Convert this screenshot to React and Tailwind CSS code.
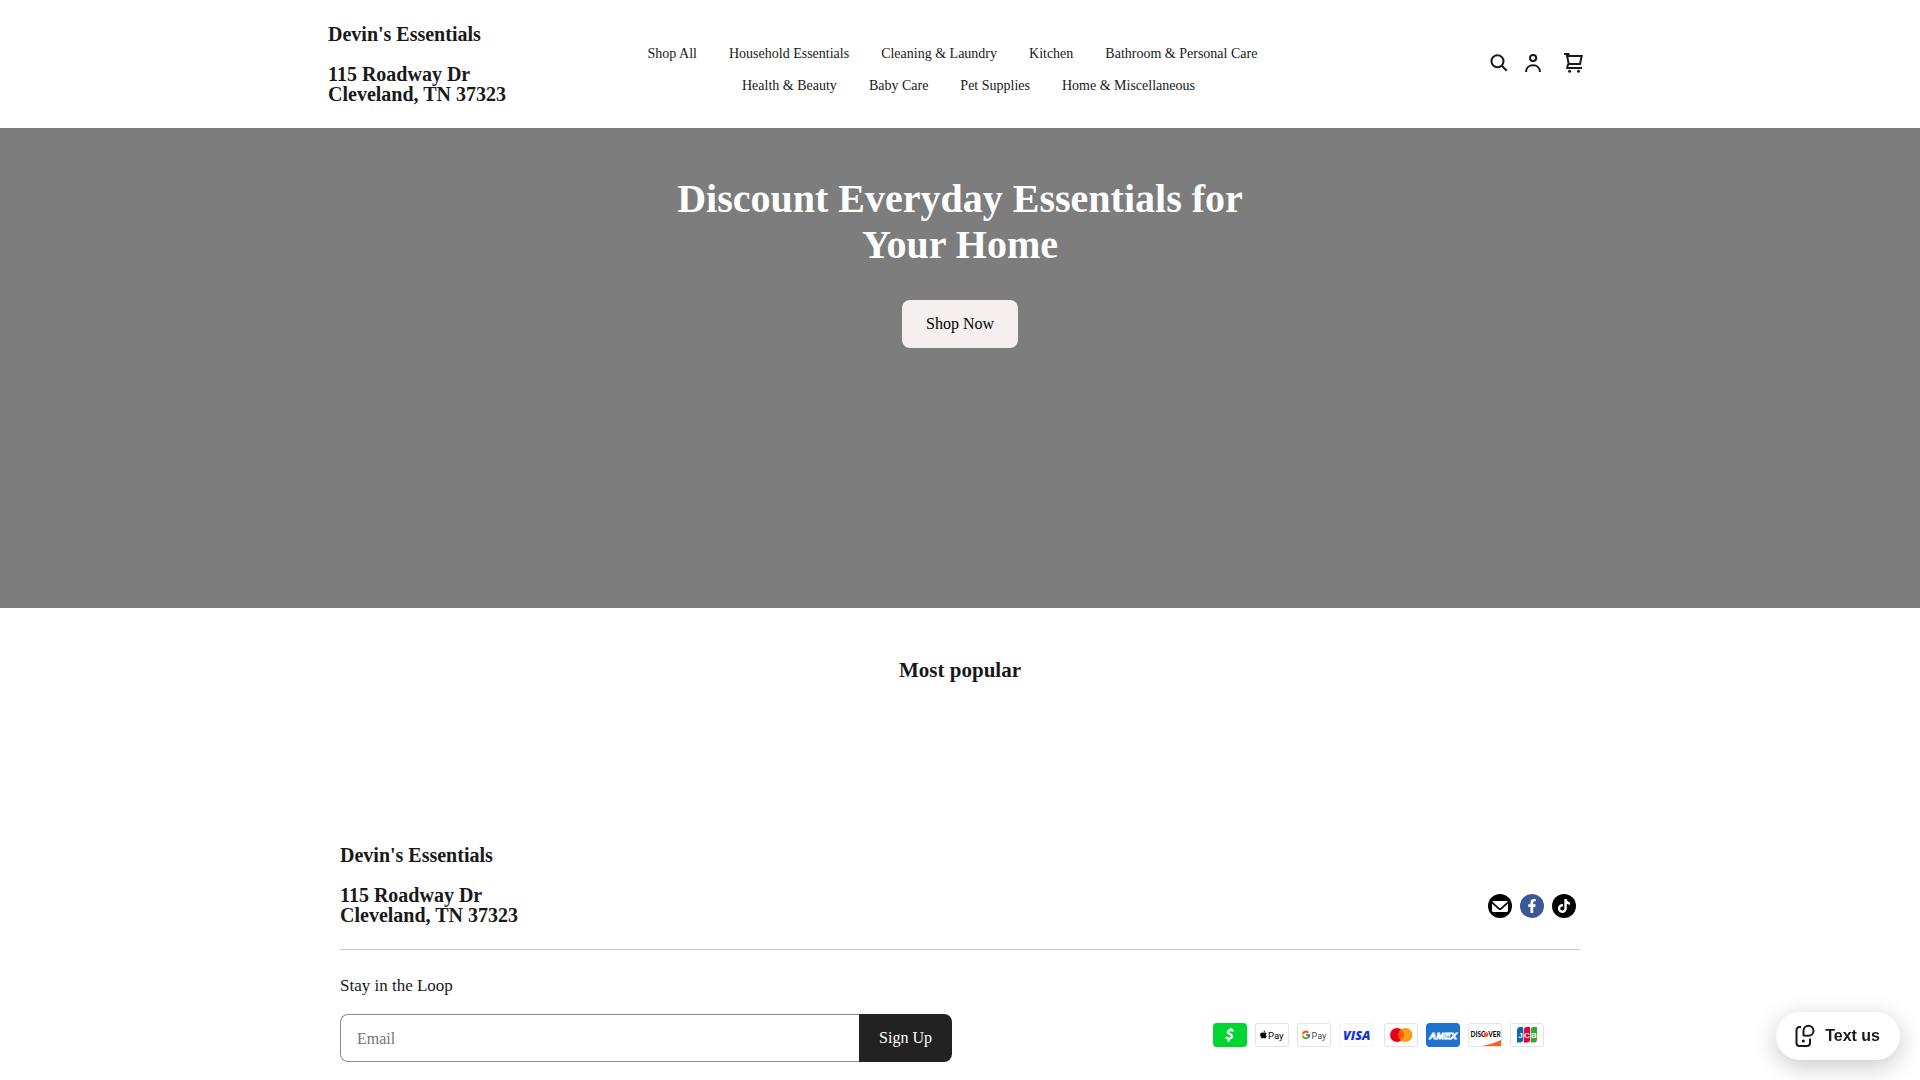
import { FaApple, FaFacebookF, FaTiktok } from 'react-icons/fa'
import { FcGoogle } from 'react-icons/fc'

const navLinks = [
  'Shop All',
  'Household Essentials',
  'Cleaning & Laundry',
  'Kitchen',
  'Bathroom & Personal Care',
  'Health & Beauty',
  'Baby Care',
  'Pet Supplies',
  'Home & Miscellaneous',
]

function StoreName() {
  return (
    <a href="#" className="block text-xl leading-5 font-bold">
      <p className="mb-5">Devin's Essentials</p>
      <p>115 Roadway Dr</p>
      <p>Cleveland, TN 37323</p>
    </a>
  )
}

function SearchIcon() {
  return (
    <svg width="24" height="24" viewBox="0 0 24 24" fill="none" stroke="currentColor" strokeWidth="2">
      <circle cx="10.5" cy="10.3" r="6" />
      <path d="M14.800 14.800l5 5" />
    </svg>
  )
}

function AccountIcon() {
  return (
    <svg width="24" height="24" viewBox="0 0 24 24" fill="none" stroke="currentColor" strokeWidth="2">
      <circle cx="12.1" cy="7.1" r="3.1" />
      <path d="M5 21c0-4 3-6.700 7-6.700s7 2.700 7 6.700" />
    </svg>
  )
}

function CartIcon() {
  return (
    <svg width="24" height="24" viewBox="0 0 24 24" fill="none" stroke="currentColor" strokeWidth="2">
      <path d="M3 3h5.500M5 5h15.700L19 13H7.700L6 4M7.500 12.500L6.300 16v1H21" />
      <circle cx="8.600" cy="20.300" r="1.500" fill="currentColor" stroke="none" />
      <circle cx="17.500" cy="20.300" r="1.500" fill="currentColor" stroke="none" />
    </svg>
  )
}

function MailIcon() {
  return (
    <svg width="24" height="24" viewBox="0 0 24 24">
      <rect x="4" y="7" width="16" height="11" rx="1.500" fill="#fff" />
      <path d="M4 8.300L10.500 14.300a2.200 2.200 0 0 0 3 0L20 8.300" fill="none" stroke="#000" strokeWidth="1.700" />
    </svg>
  )
}

function TextUsIcon() {
  return (
    <svg width="24" height="24" viewBox="0 0 24 24" fill="none" stroke="currentColor" strokeWidth="2">
      <path d="M8 3H6.500A3 3 0 0 0 3.500 6v13a3 3 0 0 0 3 3H14a3 3 0 0 0 3-3v-4.500" />
      <path d="M10.500 11.500V6.700a5 5 0 1 1 5 5z" strokeLinejoin="round" />
      <circle cx="10.300" cy="17" r="1.600" fill="currentColor" stroke="none" />
    </svg>
  )
}

function Card({ label, children }) {
  return (
    <li>
      <svg width="34" height="24" viewBox="0 0 34 24" role="img" aria-label={label}>
        <rect x="0.500" y="0.500" width="33" height="23" rx="2" fill="#fff" stroke="#e3e3e3" />
        {children}
      </svg>
    </li>
  )
}

function PaymentMethods() {
  return (
    <ul className="flex gap-2">
      <Card label="Cash App">
        <rect width="34" height="24" rx="4" fill="#00d632" />
        <path d="M20.500 8.300c-1.800-1.700-5.200-1.400-5.700.5-.6 2.500 4.800 2 4.200 4.900-.5 2.300-4.300 2.300-6.300.4M18.300 5l-.6 2.500M16 16l-.6 2.800" fill="none" stroke="#fff" strokeWidth="2.200" />
      </Card>
      <Card label="Apple Pay">
        <FaApple x="4" y="7" size={9} color="#000" />
        <text x="13" y="15.500" fontFamily="Roboto, sans-serif" fontSize="9.500" fill="#000">Pay</text>
      </Card>
      <Card label="Google Pay">
        <FcGoogle x="4" y="7" size={10} />
        <text x="14.500" y="15.500" fontFamily="Roboto, sans-serif" fontSize="9" fill="#4a4d52">Pay</text>
      </Card>
      <li className="pr-[3px]">
        <svg width="34" height="24" viewBox="0 0 34 24" role="img" aria-label="Visa" className="overflow-visible">
          <rect x="0.500" y="0.500" width="34" height="23" rx="4" fill="#fff" stroke="#f5f5f5" />
          <text x="4" y="16.500" fontFamily="'Open Sans', sans-serif" fontSize="12.500" fontWeight="800" fontStyle="italic" fill="#1434cb">VISA</text>
        </svg>
      </li>
      <Card label="Mastercard">
        <circle cx="13" cy="12" r="7" fill="#eb001b" />
        <circle cx="21.500" cy="12" r="7" fill="#f79e1b" />
        <path d="M17.250 6.400a7 7 0 0 1 0 11.200a7 7 0 0 1 0-11.200z" fill="#ff5f00" />
      </Card>
      <Card label="American Express">
        <rect width="34" height="24" rx="4" fill="#1f72cd" />
        <text x="17" y="15.700" textAnchor="middle" fontFamily="'Liberation Sans', sans-serif" fontSize="9.500" fontWeight="700" fontStyle="italic" fill="#1f72cd" stroke="#fff" strokeWidth="0.900">AMEX</text>
      </Card>
      <Card label="Discover">
        <path d="M14 23C21 21.500 28 19.500 33 17v6z" fill="#ff6020" />
        <text x="2.500" y="14" fontFamily="Lato, sans-serif" fontSize="6.500" fontWeight="900" fill="#111">DISC</text>
        <circle cx="18" cy="11.700" r="2.400" fill="#f26122" />
        <text x="20.200" y="14" fontFamily="Lato, sans-serif" fontSize="6.500" fontWeight="900" fill="#111">VER</text>
      </Card>
      <Card label="JCB">
        <path d="M9.500 4H13v12.500a3 3 0 0 1-3 3H7V7a3 3 0 0 1 2.500-3z" fill="#0e65b0" />
        <path d="M16.500 4H20v12.500a3 3 0 0 1-3 3H13.700V7a3 3 0 0 1 2.800-3z" fill="#e3063a" />
        <path d="M23.500 4H27v12.500a3 3 0 0 1-3 3H20.700V7a3 3 0 0 1 2.800-3z" fill="#35a537" />
        <text x="8.300 14.100 21" y="14.700" fontFamily="'Liberation Sans', sans-serif" fontSize="8" fontWeight="700" fill="#fff">JCB</text>
      </Card>
    </ul>
  )
}

function Header() {
  return (
    <header className="max-w-[1264px] mx-auto py-6 flex items-center">
      <StoreName />
      <div className="flex-1 pt-3 pr-13 flex justify-center">
        <nav className="max-w-[740px]">
          <ul className="flex flex-wrap justify-center">
            {navLinks.map((link) => (
              <li key={link} className="mr-8 last:mr-0">
                <a href="#" className="block text-sm leading-8">{link}</a>
              </li>
            ))}
          </ul>
        </nav>
      </div>
      <div className="flex items-center pl-1 pr-[7px] pb-0.5">
        <button type="button" aria-label="Search" className="mr-[10px]"><SearchIcon /></button>
        <button type="button" aria-label="Account" className="mr-4"><AccountIcon /></button>
        <button type="button" aria-label="Cart"><CartIcon /></button>
      </div>
    </header>
  )
}

function Hero() {
  return (
    <section className="min-h-[480px] bg-[#7d7d7d] pt-12 flex flex-col items-center text-center">
      <h1 className="max-w-[600px] text-[40px] leading-[46px] font-bold text-white">
        Discount Everyday Essentials for Your Home
      </h1>
      <a href="#" className="mt-8 px-6 rounded-lg bg-[#f5efef] text-base leading-[48px] text-black">Shop Now</a>
    </section>
  )
}

function Footer() {
  return (
    <footer className="max-w-[1240px] mx-auto pb-4">
      <div className="flex items-end justify-between pb-6 border-b border-[#c9c9c9]">
        <StoreName />
        <div className="flex gap-2 pr-1 pb-[7px]">
          <a href="#" aria-label="Email" className="size-6 rounded-full bg-black"><MailIcon /></a>
          <a href="#" aria-label="Facebook" className="size-6 rounded-full bg-[#3b5998] text-white flex items-center justify-center">
            <FaFacebookF size={14} />
          </a>
          <a href="#" aria-label="TikTok" className="size-6 rounded-full bg-black text-white flex items-center justify-center">
            <FaTiktok size={14} />
          </a>
        </div>
      </div>
      <div className="pt-6 grid grid-cols-2 gap-4 items-end">
        <form onSubmit={(e) => e.preventDefault()}>
          <label htmlFor="email" className="block mb-4 text-[17px] leading-6">Stay in the Loop</label>
          <div className="flex h-12">
            <input
              id="email"
              type="email"
              placeholder="Email"
              className="flex-1 min-w-0 px-4 pt-0.5 rounded-l-lg border border-r-0 border-[#8c8c8c] text-base placeholder:text-[#757575]"
            />
            <button type="submit" className="px-5 rounded-r-lg bg-[#222222] text-base text-white">Sign Up</button>
          </div>
        </form>
        <div className="flex justify-end pr-9 pb-[15px]">
          <PaymentMethods />
        </div>
      </div>
    </footer>
  )
}

export default function App() {
  return (
    <div className="min-h-screen bg-white font-['Liberation_Serif',serif] text-[#191919]">
      <Header />
      <main>
        <Hero />
        <section className="min-h-[237px] pt-12">
          <h2 className="text-center text-[21px] leading-7 font-bold">Most popular</h2>
        </section>
      </main>
      <Footer />
      <button
        type="button"
        className="fixed right-5 bottom-5 h-12 pl-[17px] pr-5 flex items-center gap-2 rounded-full bg-white shadow-[0_6px_24px_rgba(0,0,0,0.22)] font-['Liberation_Sans',sans-serif] text-base font-bold"
      >
        <TextUsIcon />
        Text us
      </button>
    </div>
  )
}
